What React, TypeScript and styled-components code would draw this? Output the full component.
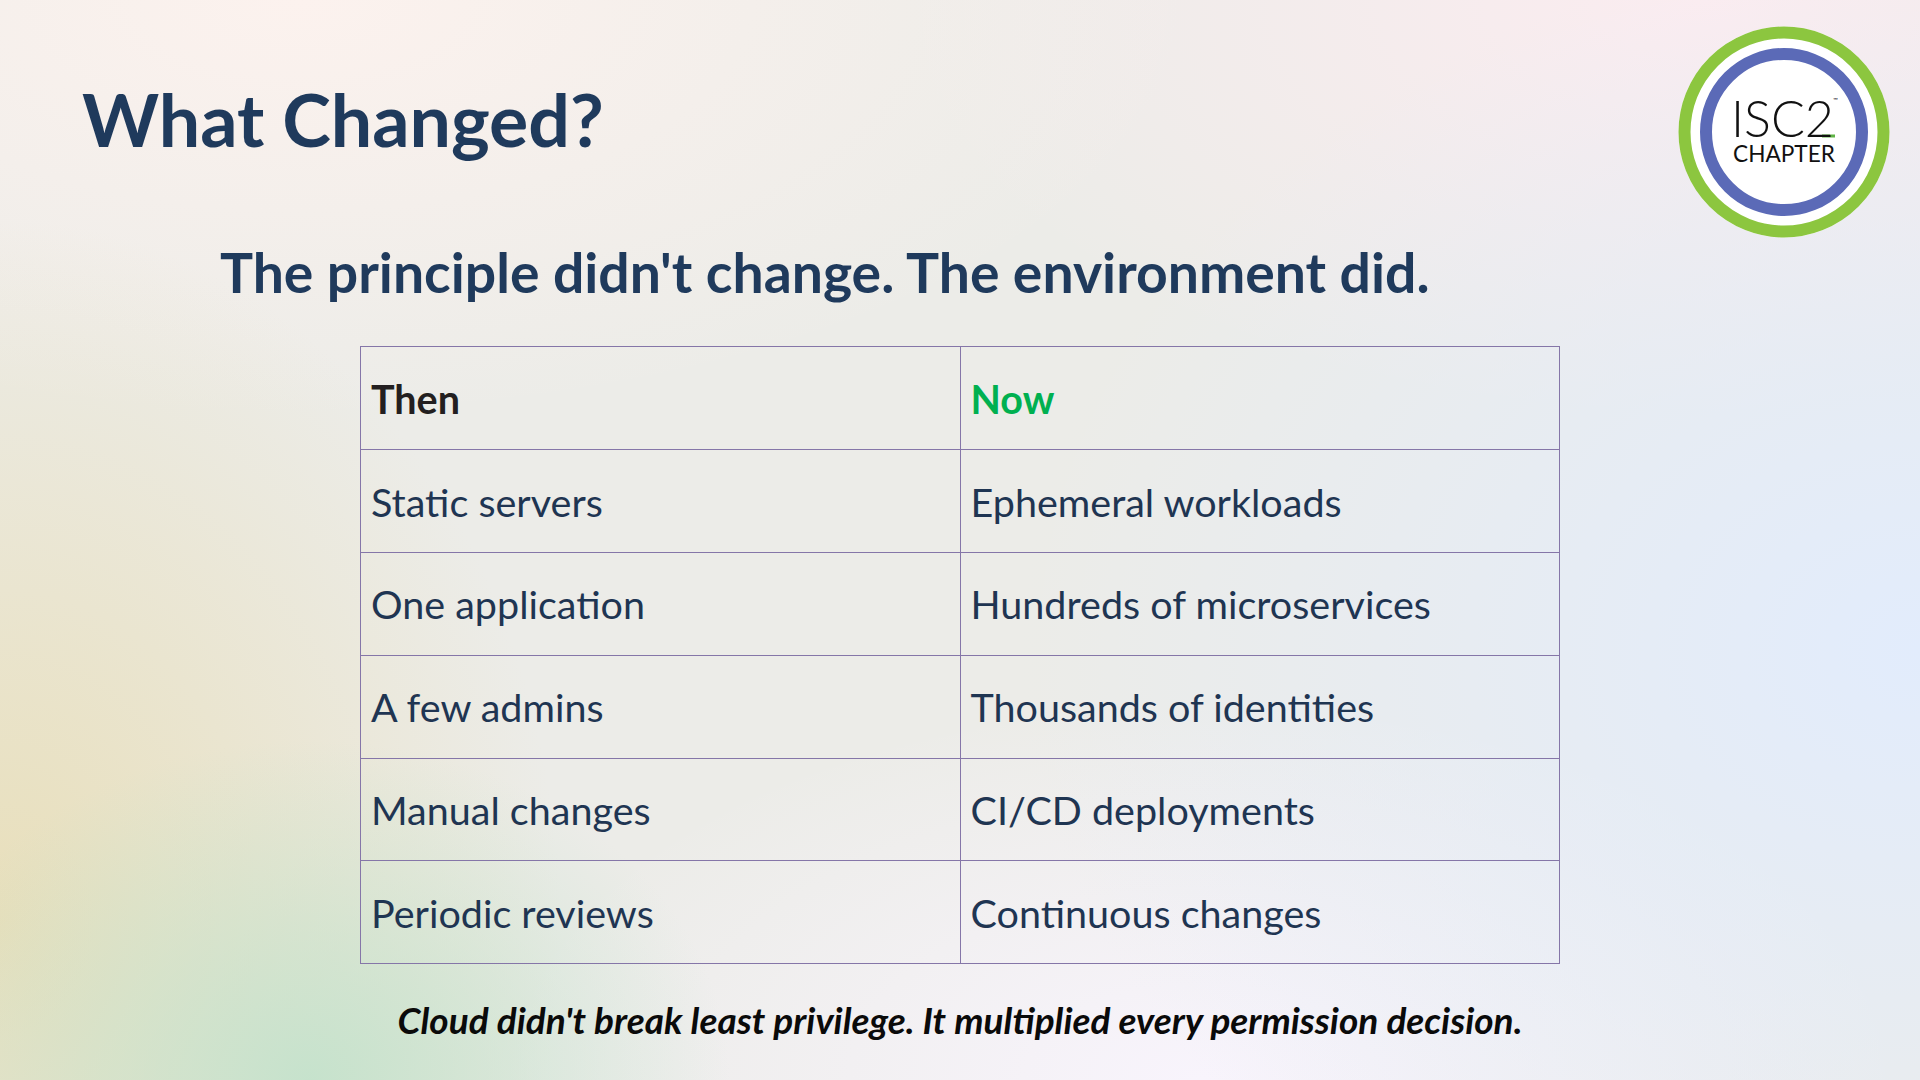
import styled, { createGlobalStyle } from "styled-components";
import { FC } from "react";

const GlobalStyle = createGlobalStyle`
    html, body {
        margin: 0;
        padding: 0;
    }
    body {
        font-family: "Lato", "Noto Sans", sans-serif;
    }
`;

const Slide = styled.div`
    width: 1920px;
    height: 1080px;
    box-sizing: border-box;
    display: flex;
    flex-direction: column;
    overflow: hidden;
    background:
        radial-gradient(ellipse 420px 340px at 310px 1080px, rgba(196, 226, 204, 0.95), transparent),
        radial-gradient(ellipse 560px 700px at 0px 920px, rgba(232, 222, 184, 0.95), transparent),
        radial-gradient(ellipse 900px 700px at 1920px 650px, rgba(226, 236, 252, 1), transparent),
        radial-gradient(ellipse 700px 380px at 1200px 1080px, rgba(248, 244, 252, 1), transparent),
        radial-gradient(ellipse 900px 420px at 300px 0px, rgba(252, 242, 238, 1), transparent),
        radial-gradient(ellipse 800px 420px at 1700px 0px, rgba(251, 236, 240, 1), transparent),
        #ecece8;
`;

const Header = styled.header`
    display: flex;
    justify-content: space-between;
    align-items: flex-start;
    height: 239px;
    padding: 0 30px 0 82px;
`;

const Title = styled.h1`
    margin: 75px 0 0;
    font-size: 73.5px;
    line-height: 1.2;
    font-weight: 700;
    color: #1f3a5c;
`;

const Logo = styled.svg`
    margin-top: 26px;
    flex-shrink: 0;
`;

const Subtitle = styled.h2`
    margin: 0 0 0 220px;
    font-size: 55.3px;
    line-height: 1.2;
    font-weight: 700;
    color: #1f3a5c;
`;

const Body = styled.div`
    display: flex;
    flex-direction: column;
    width: 1200px;
    margin: 41px 0 0 360px;
`;

const Table = styled.table`
    width: 1200px;
    border-collapse: collapse;
    table-layout: fixed;
`;

const Row = styled.tr`
    height: 102.8px;
`;

const Cell = styled.td<{ $head?: boolean; $accent?: boolean }>`
    border: 1.5px solid #8576a8;
    padding: 0 10px;
    vertical-align: middle;
    font-size: 39.5px;
    font-weight: ${({ $head }) => ($head ? 700 : 400)};
    color: ${({ $head, $accent }) => ($accent ? "#00b050" : $head ? "#231f20" : "#1f3552")};
    white-space: nowrap;
`;

const Footer = styled.p`
    margin: 34px 0 0;
    text-align: center;
    font-size: 37px;
    line-height: 1.2;
    font-weight: 700;
    font-style: italic;
    color: #0a0a0a;
`;

const rows: [string, string][] = [
    ["Static servers", "Ephemeral workloads"],
    ["One application", "Hundreds of microservices"],
    ["A few admins", "Thousands of identities"],
    ["Manual changes", "CI/CD deployments"],
    ["Periodic reviews", "Continuous changes"],
];

const ChapterLogo: FC = () => (
    <Logo width="212" height="212" viewBox="-106 -106 212 212">
        <circle r="105.5" fill="#ffffff" />
        <circle r="99.5" fill="none" stroke="#8cc63f" strokeWidth="12" />
        <circle r="78" fill="none" stroke="#5b6ab7" strokeWidth="12" />
        <rect x="38" y="2.5" width="13" height="3" fill="#5fb345" />
        <text fontFamily="Lato, sans-serif" fill="#111111">
            <tspan
                x="-53"
                y="4.5"
                fontWeight="300"
                fontSize="51"
                textLength="103"
                lengthAdjust="spacingAndGlyphs"
            >
                ISC2
            </tspan>
            <tspan x="49" y="-30" fontSize="6">
                ™
            </tspan>
            <tspan
                x="-51"
                y="30"
                fontWeight="400"
                fontSize="23"
                textLength="102"
                lengthAdjust="spacingAndGlyphs"
            >
                CHAPTER
            </tspan>
        </text>
    </Logo>
);

const App: FC = () => (
    <>
        <GlobalStyle />
        <Slide>
            <Header>
                <Title>What Changed?</Title>
                <ChapterLogo />
            </Header>
            <Subtitle>The principle didn't change. The environment did.</Subtitle>
            <Body>
                <Table>
                    <tbody>
                        <Row>
                            <Cell $head>Then</Cell>
                            <Cell $head $accent>Now</Cell>
                        </Row>
                        {rows.map(([then, now]) => (
                            <Row key={then}>
                                <Cell>{then}</Cell>
                                <Cell>{now}</Cell>
                            </Row>
                        ))}
                    </tbody>
                </Table>
                <Footer>Cloud didn't break least privilege. It multiplied every permission decision.</Footer>
            </Body>
        </Slide>
    </>
);

export default App;
